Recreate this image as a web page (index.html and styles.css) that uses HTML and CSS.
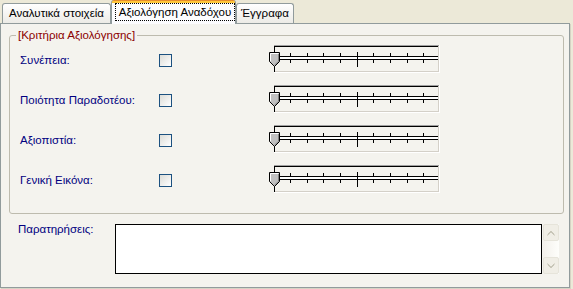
FILE: index.html
```html
<!DOCTYPE html>
<html lang="el">
<head>
<meta charset="utf-8">
<title>Αξιολόγηση Αναδόχου</title>
<link rel="stylesheet" href="styles.css">
</head>
<body>
<div class="tabs">
  <div class="tab t1">Αναλυτικά στοιχεία</div>
  <div class="tab t2 active"><span class="focus">Αξιολόγηση Αναδόχου</span></div>
  <div class="tab t3">Έγγραφα</div>
</div>
<div class="panel">
  <fieldset class="group">
    <legend>[Κριτήρια Αξιολόγησης]</legend>
    <div class="rows">
      <div class="row">
        <span class="lbl">Συνέπεια:</span>
        <span class="chk"></span>
        <svg class="track" width="176" height="30" viewBox="0 0 176 30">
          <path d="M8 1.5H173" stroke="#a0a0a0"/>
          <path d="M8 2.5H172M8.5 2V28" stroke="#000"/>
          <path d="M9 27.5H173M172.5 2V28" stroke="#d4d0c8"/>
          <path d="M8 28.5H174M173.5 1V29" stroke="#fff"/>
          <rect x="8" y="13" width="164" height="2" fill="#fff"/>
          <path d="M8 12.5H172M8 15.5H172" stroke="#000"/>
          <path d="M24.5 9V12M41.5 9V12M57.5 9V12M74.5 9V12M107.5 9V12M124.5 9V12M141.5 9V12M157.5 9V12M24.5 16V19M41.5 16V19M57.5 16V19M74.5 16V19M107.5 16V19M124.5 16V19M141.5 16V19M157.5 16V19M91.5 8V23" stroke="#000"/>
          <path d="M3.5 8.5H13.5V17.5L8.5 22.5L3.5 17.5Z" fill="#c0c0c0" stroke="#000"/>
          <path d="M4.5 17V9.5H12.5" stroke="#fff" fill="none"/>
          <path d="M12.5 10V17.2L8.5 21.2" stroke="#808080" fill="none"/>
        </svg>
      </div>
      <div class="row">
        <span class="lbl">Ποιότητα Παραδοτέου:</span>
        <span class="chk"></span>
        <svg class="track" width="176" height="30" viewBox="0 0 176 30">
          <path d="M8 1.5H173" stroke="#a0a0a0"/>
          <path d="M8 2.5H172M8.5 2V28" stroke="#000"/>
          <path d="M9 27.5H173M172.5 2V28" stroke="#d4d0c8"/>
          <path d="M8 28.5H174M173.5 1V29" stroke="#fff"/>
          <rect x="8" y="13" width="164" height="2" fill="#fff"/>
          <path d="M8 12.5H172M8 15.5H172" stroke="#000"/>
          <path d="M24.5 9V12M41.5 9V12M57.5 9V12M74.5 9V12M107.5 9V12M124.5 9V12M141.5 9V12M157.5 9V12M24.5 16V19M41.5 16V19M57.5 16V19M74.5 16V19M107.5 16V19M124.5 16V19M141.5 16V19M157.5 16V19M91.5 8V23" stroke="#000"/>
          <path d="M3.5 8.5H13.5V17.5L8.5 22.5L3.5 17.5Z" fill="#c0c0c0" stroke="#000"/>
          <path d="M4.5 17V9.5H12.5" stroke="#fff" fill="none"/>
          <path d="M12.5 10V17.2L8.5 21.2" stroke="#808080" fill="none"/>
        </svg>
      </div>
      <div class="row">
        <span class="lbl">Αξιοπιστία:</span>
        <span class="chk"></span>
        <svg class="track" width="176" height="30" viewBox="0 0 176 30">
          <path d="M8 1.5H173" stroke="#a0a0a0"/>
          <path d="M8 2.5H172M8.5 2V28" stroke="#000"/>
          <path d="M9 27.5H173M172.5 2V28" stroke="#d4d0c8"/>
          <path d="M8 28.5H174M173.5 1V29" stroke="#fff"/>
          <rect x="8" y="13" width="164" height="2" fill="#fff"/>
          <path d="M8 12.5H172M8 15.5H172" stroke="#000"/>
          <path d="M24.5 9V12M41.5 9V12M57.5 9V12M74.5 9V12M107.5 9V12M124.5 9V12M141.5 9V12M157.5 9V12M24.5 16V19M41.5 16V19M57.5 16V19M74.5 16V19M107.5 16V19M124.5 16V19M141.5 16V19M157.5 16V19M91.5 8V23" stroke="#000"/>
          <path d="M3.5 8.5H13.5V17.5L8.5 22.5L3.5 17.5Z" fill="#c0c0c0" stroke="#000"/>
          <path d="M4.5 17V9.5H12.5" stroke="#fff" fill="none"/>
          <path d="M12.5 10V17.2L8.5 21.2" stroke="#808080" fill="none"/>
        </svg>
      </div>
      <div class="row">
        <span class="lbl">Γενική Εικόνα:</span>
        <span class="chk"></span>
        <svg class="track" width="176" height="30" viewBox="0 0 176 30">
          <path d="M8 1.5H173" stroke="#a0a0a0"/>
          <path d="M8 2.5H172M8.5 2V28" stroke="#000"/>
          <path d="M9 27.5H173M172.5 2V28" stroke="#d4d0c8"/>
          <path d="M8 28.5H174M173.5 1V29" stroke="#fff"/>
          <rect x="8" y="13" width="164" height="2" fill="#fff"/>
          <path d="M8 12.5H172M8 15.5H172" stroke="#000"/>
          <path d="M24.5 9V12M41.5 9V12M57.5 9V12M74.5 9V12M107.5 9V12M124.5 9V12M141.5 9V12M157.5 9V12M24.5 16V19M41.5 16V19M57.5 16V19M74.5 16V19M107.5 16V19M124.5 16V19M141.5 16V19M157.5 16V19M91.5 8V23" stroke="#000"/>
          <path d="M3.5 8.5H13.5V17.5L8.5 22.5L3.5 17.5Z" fill="#c0c0c0" stroke="#000"/>
          <path d="M4.5 17V9.5H12.5" stroke="#fff" fill="none"/>
          <path d="M12.5 10V17.2L8.5 21.2" stroke="#808080" fill="none"/>
        </svg>
      </div>
    </div>
  </fieldset>
  <div class="notes">
    <span class="lbl notes-lbl">Παρατηρήσεις:</span>
    <div class="box"></div>
    <div class="scroll">
      <div class="sbtn">
        <svg width="14" height="15" viewBox="0 0 14 15"><path d="M3.5 9.5L7 6L10.5 9.5M3.5 10.5L7 7L10.5 10.5" stroke="#c8c6b8" fill="none"/></svg>
      </div>
      <div class="strack"></div>
      <div class="sbtn">
        <svg width="14" height="15" viewBox="0 0 14 15"><path d="M3.5 5.5L7 9L10.5 5.5M3.5 6.5L7 10L10.5 6.5" stroke="#c8c6b8" fill="none"/></svg>
      </div>
    </div>
  </div>
</div>
</body>
</html>
```
FILE: styles.css
```css
* {
  box-sizing: border-box;
}

html, body {
  margin: 0;
  padding: 0;
}

body {
  width: 573px;
  height: 289px;
  overflow: hidden;
  background: #ECE9D8;
  font-family: "Liberation Sans", Arial, sans-serif;
  font-size: 11.5px;
  line-height: 13px;
  color: #000;
}

.tabs {
  display: flex;
  align-items: flex-end;
  height: 23px;
  padding-left: 2px;
}

.tab {
  height: 20px;
  border: 1px solid #919B9C;
  border-bottom: 0;
  border-radius: 3px 3px 0 0;
  background: linear-gradient(#ffffff, #ECEBE6);
  display: flex;
  align-items: center;
  justify-content: center;
  white-space: nowrap;
}

.t1 {
  width: 109px;
}

.t2 {
  width: 125px;
}

.t3 {
  width: 58px;
}

.tab.active {
  height: 24px;
  margin-bottom: -1px;
  position: relative;
  z-index: 1;
  border-top: 0;
  background: linear-gradient(#E68B2C 0 1px, #FFC73C 1px 3px, #FCFCFE 3px);
  align-items: flex-start;
  justify-content: flex-start;
  padding: 3px 0 0 3px;
}

.focus {
  display: flex;
  align-items: center;
  justify-content: center;
  width: 120px;
  height: 18px;
  border: 1px dotted #000;
}

.panel {
  width: 570px;
  height: 265px;
  border: 1px solid #919B9C;
  background: #F4F3EE;
  box-shadow: 1px 1px 0 #D6D3C4;
  padding: 0;
}

.group {
  width: 555px;
  margin: 5px 0 0 8px;
  padding: 0;
  border: 1px solid #BDBBAE;
  border-radius: 3px;
  min-inline-size: 0;
}

.group legend {
  margin-left: 6px;
  padding: 0 2px;
  color: #8B0000;
  line-height: 13px;
}

.rows {
  padding: 2px 0 9px 10px;
}

.row {
  display: grid;
  grid-template-columns: 139px 107px 176px;
  align-items: start;
  height: 40px;
}

.lbl {
  color: #000080;
  margin-top: 10px;
  white-space: nowrap;
}

.chk {
  display: block;
  width: 13px;
  height: 13px;
  margin-top: 10px;
  border: 1px solid #1C5180;
  background: linear-gradient(135deg, #DCDCD7, #FFFFFF);
}

.track {
  display: block;
}

.notes {
  display: flex;
  align-items: flex-start;
  margin-top: 10px;
  padding-left: 17px;
}

.notes-lbl {
  width: 97px;
  margin-top: -1px;
}

.box {
  width: 427px;
  height: 50px;
  border: 1px solid #000;
  background: #fff;
}

.scroll {
  display: flex;
  flex-direction: column;
  width: 16px;
  height: 50px;
  margin-left: 1px;
  background: linear-gradient(90deg, #F3F1EC, #FEFEFB);
}

.sbtn {
  height: 17px;
  border: 1px solid #E6E4DA;
  border-radius: 2px;
  background: #F0EEE6;
  display: flex;
  align-items: center;
  justify-content: center;
}

.strack {
  flex: 1;
}
```
